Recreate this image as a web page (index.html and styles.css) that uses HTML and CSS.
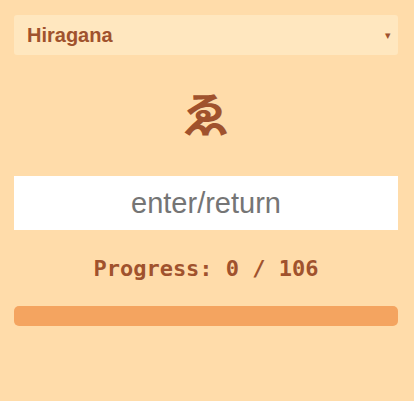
FILE: index.html
```html
<!DOCTYPE html>
<html>
<head>
<meta charset="utf-8">
<link rel="stylesheet" href="styles.css">
</head>
<body>
<main class="app">
  <div class="select">
    <span class="select-label">Hiragana</span>
    <span class="select-arrow">▾</span>
  </div>
  <div class="kana">ゑ</div>
  <input class="answer" type="text" placeholder="enter/return">
  <div class="progress-text">Progress: 0 / 106</div>
  <div class="bar"></div>
</main>
</body>
</html>
```

FILE: styles.css
```css
html, body {
  margin: 0;
  padding: 0;
  background: #ffdcaa;
}
.app {
  padding: 15px 16px 0 14px;
  display: flex;
  flex-direction: column;
  font-family: "Liberation Sans", Arial, sans-serif;
}
.select {
  height: 40px;
  background: #ffe7bf;
  border-radius: 3px;
  display: flex;
  align-items: center;
  justify-content: space-between;
  padding: 0 7px 0 13px;
  color: #a0522d;
  box-sizing: border-box;
}
.select-label {
  font-weight: bold;
  font-size: 20px;
}
.select-arrow {
  font-size: 11px;
}
.kana {
  margin-top: 27px;
  text-align: center;
  font-family: "Noto Sans CJK JP", sans-serif;
  font-weight: bold;
  font-size: 47px;
  line-height: 60px;
  color: #a0522d;
  height: 60px;
}
.answer {
  margin-top: 34px;
  height: 54px;
  border: none;
  outline: none;
  background: #ffffff;
  text-align: center;
  font-family: "Liberation Sans", Arial, sans-serif;
  font-size: 29px;
  padding: 0;
  box-sizing: border-box;
  width: 100%;
}
.answer::placeholder {
  color: #757575;
}
.progress-text {
  margin-top: 26px;
  text-align: center;
  font-family: "DejaVu Sans Mono", monospace;
  font-weight: bold;
  font-size: 22px;
  line-height: 26px;
  color: #a0522d;
}
.bar {
  margin-top: 24px;
  height: 20px;
  border-radius: 5px;
  background: #f4a460;
}
```
